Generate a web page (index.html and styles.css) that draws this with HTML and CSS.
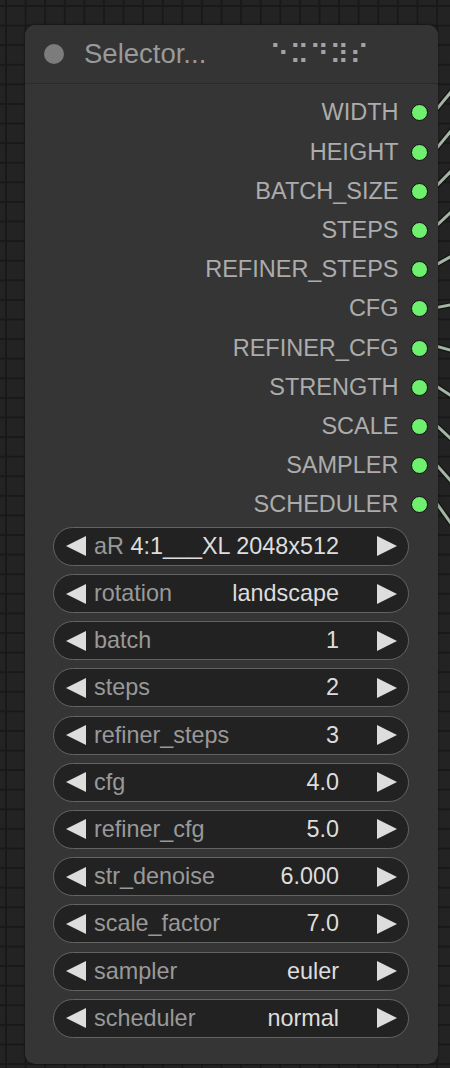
FILE: index.html
```html
<!DOCTYPE html>
<html>
<head>
<meta charset="utf-8">
<link rel="stylesheet" href="styles.css">
</head>
<body>
<div class="canvas">
  <svg class="links" width="24" height="1068" viewBox="430 0 24 1068">
    <g class="link-outline">
      <path d="M432 114.9 L452 90.6"/>
      <path d="M432 153.9 L452 129.6"/>
      <path d="M432 190.5 L452 170"/>
      <path d="M432 229.8 L452 211.1"/>
      <path d="M432 267.1 L452 255.9"/>
      <path d="M432 308.4 L452 304.6"/>
      <path d="M432 345 L452 350.6"/>
      <path d="M432 383.2 L452 396.3"/>
      <path d="M432 421.2 L452 439.9"/>
      <path d="M432 459.8 L452 482.2"/>
      <path d="M432 496.8 L452 524.8"/>
    </g>
    <g class="link-line">
      <path d="M432 114.9 L452 90.6"/>
      <path d="M432 153.9 L452 129.6"/>
      <path d="M432 190.5 L452 170"/>
      <path d="M432 229.8 L452 211.1"/>
      <path d="M432 267.1 L452 255.9"/>
      <path d="M432 308.4 L452 304.6"/>
      <path d="M432 345 L452 350.6"/>
      <path d="M432 383.2 L452 396.3"/>
      <path d="M432 421.2 L452 439.9"/>
      <path d="M432 459.8 L452 482.2"/>
      <path d="M432 496.8 L452 524.8"/>
    </g>
  </svg>
  <div class="node">
    <div class="title">
      <span class="title-dot"></span>
      <span class="title-text">Selector...</span>
      <span class="braille">⠑⠭⠙⠽⠎</span>
    </div>
    <div class="outputs">
      <div class="slot"><span class="slot-label">WIDTH</span><span class="slot-dot"></span></div>
      <div class="slot"><span class="slot-label">HEIGHT</span><span class="slot-dot"></span></div>
      <div class="slot"><span class="slot-label">BATCH_SIZE</span><span class="slot-dot"></span></div>
      <div class="slot"><span class="slot-label">STEPS</span><span class="slot-dot"></span></div>
      <div class="slot"><span class="slot-label">REFINER_STEPS</span><span class="slot-dot"></span></div>
      <div class="slot"><span class="slot-label">CFG</span><span class="slot-dot"></span></div>
      <div class="slot"><span class="slot-label">REFINER_CFG</span><span class="slot-dot"></span></div>
      <div class="slot"><span class="slot-label">STRENGTH</span><span class="slot-dot"></span></div>
      <div class="slot"><span class="slot-label">SCALE</span><span class="slot-dot"></span></div>
      <div class="slot"><span class="slot-label">SAMPLER</span><span class="slot-dot"></span></div>
      <div class="slot"><span class="slot-label">SCHEDULER</span><span class="slot-dot"></span></div>
    </div>
    <div class="widgets">
      <div class="widget"><span class="arrow arrow-left"></span><span class="w-label">aR</span><span class="w-value">4:1___XL 2048x512</span><span class="arrow arrow-right"></span></div>
      <div class="widget"><span class="arrow arrow-left"></span><span class="w-label">rotation</span><span class="w-value">landscape</span><span class="arrow arrow-right"></span></div>
      <div class="widget"><span class="arrow arrow-left"></span><span class="w-label">batch</span><span class="w-value">1</span><span class="arrow arrow-right"></span></div>
      <div class="widget"><span class="arrow arrow-left"></span><span class="w-label">steps</span><span class="w-value">2</span><span class="arrow arrow-right"></span></div>
      <div class="widget"><span class="arrow arrow-left"></span><span class="w-label">refiner_steps</span><span class="w-value">3</span><span class="arrow arrow-right"></span></div>
      <div class="widget"><span class="arrow arrow-left"></span><span class="w-label">cfg</span><span class="w-value">4.0</span><span class="arrow arrow-right"></span></div>
      <div class="widget"><span class="arrow arrow-left"></span><span class="w-label">refiner_cfg</span><span class="w-value">5.0</span><span class="arrow arrow-right"></span></div>
      <div class="widget"><span class="arrow arrow-left"></span><span class="w-label">str_denoise</span><span class="w-value">6.000</span><span class="arrow arrow-right"></span></div>
      <div class="widget"><span class="arrow arrow-left"></span><span class="w-label">scale_factor</span><span class="w-value">7.0</span><span class="arrow arrow-right"></span></div>
      <div class="widget"><span class="arrow arrow-left"></span><span class="w-label">sampler</span><span class="w-value">euler</span><span class="arrow arrow-right"></span></div>
      <div class="widget"><span class="arrow arrow-left"></span><span class="w-label">scheduler</span><span class="w-value">normal</span><span class="arrow arrow-right"></span></div>
    </div>
  </div>
</div>
</body>
</html>
```

FILE: styles.css
```css
* { box-sizing: border-box; }
html, body {
  margin: 0;
  padding: 0;
}
body {
  width: 450px;
  height: 1068px;
  overflow: hidden;
  font-family: "Liberation Sans", Arial, sans-serif;
  background-color: #232323;
  background-image:
    linear-gradient(to right, #191919 1.5px, transparent 1.5px),
    linear-gradient(to bottom, #191919 1.5px, transparent 1.5px);
  background-size: 19.6px 19.6px;
  background-position: 5px 5px;
}
.canvas {
  position: relative;
  width: 450px;
  height: 1068px;
  padding: 25px 0 0 25px;
}
.links {
  position: absolute;
  left: 430px;
  top: 0;
  z-index: 0;
}
.link-outline path {
  stroke: #141414;
  stroke-width: 5.5;
  fill: none;
}
.link-line path {
  stroke: #a6b6a6;
  stroke-width: 3;
  fill: none;
}
.node {
  position: relative;
  z-index: 1;
  width: 413px;
  height: 1039px;
  background: #353535;
  border-radius: 10px;
  box-shadow: 0 0 3px rgba(0,0,0,0.4);
}
.title {
  height: 59px;
  display: flex;
  align-items: center;
  padding-left: 19px;
  background: #343434;
  border-bottom: 1px solid #2a2a2a;
  border-radius: 10px 10px 0 0;
}
.title-dot {
  width: 20px;
  height: 20px;
  border-radius: 50%;
  background: #7c7c7c;
  flex: none;
}
.title-text {
  margin-left: 20px;
  font-size: 27.5px;
  color: #9a9a9a;
  white-space: nowrap;
}
.braille {
  margin-left: 63px;
  font-family: "DejaVu Sans", sans-serif;
  font-size: 27.3px;
  color: #a4a4a4;
  white-space: nowrap;
}
.outputs {
  padding-top: 9.4px;
}
.slot {
  height: 39.2px;
  display: flex;
  justify-content: flex-end;
  align-items: center;
  padding-right: 10.5px;
}
.slot-label {
  font-size: 23.5px;
  color: #acacac;
  margin-right: 12px;
  white-space: nowrap;
}
.slot-dot {
  width: 17px;
  height: 17px;
  border-radius: 50%;
  background: #6ef06e;
  border: 1.8px solid #0e0e0e;
  flex: none;
}
.widgets {
  padding: 2.4px 29.5px 0 28px;
  display: flex;
  flex-direction: column;
  gap: 8.2px;
}
.widget {
  height: 39px;
  display: flex;
  align-items: center;
  padding: 0 11px 0 11.5px;
  background: #222222;
  border: 1.8px solid #636363;
  border-radius: 20px;
  font-size: 23.4px;
}
.arrow {
  width: 0;
  height: 0;
  flex: none;
  border-top: 10px solid transparent;
  border-bottom: 10px solid transparent;
}
.arrow-left {
  border-right: 20px solid #dddddd;
}
.arrow-right {
  border-left: 20.5px solid #dddddd;
}
.w-label {
  margin-left: 8.5px;
  color: #999999;
  white-space: nowrap;
}
.w-value {
  flex: 1;
  text-align: right;
  color: #dddddd;
  white-space: nowrap;
  margin-right: 37.5px;
  margin-left: 6px;
}
```
